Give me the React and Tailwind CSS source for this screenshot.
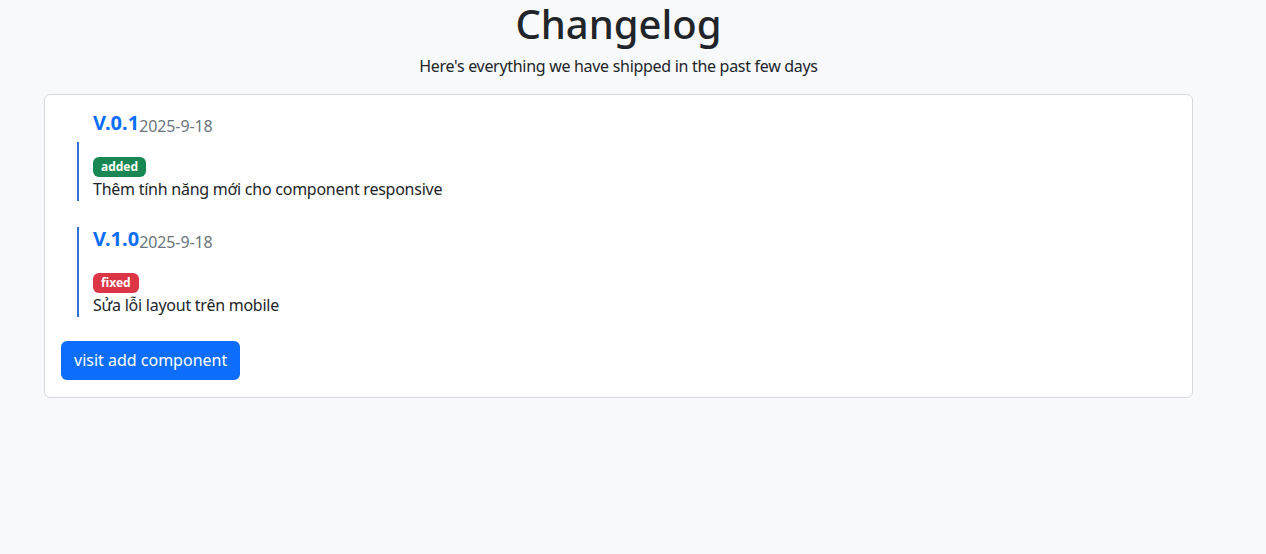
export default function App() {
  const entries = [
    { version: "V.0.1", date: "2025-9-18", tag: "added", tagColor: "bg-[#198754]", text: "Thêm tính năng mới cho component responsive", titleInside: false },
    { version: "V.1.0", date: "2025-9-18", tag: "fixed", tagColor: "bg-[#dc3545]", text: "Sửa lỗi layout trên mobile", titleInside: true },
  ];

  const Title = ({ e }) => (
    <div className="flex items-baseline">
      <span className="text-[20px] leading-[24px] font-bold text-[#0d6efd]">{e.version}</span>
      <span className="text-[16px] leading-[24px] text-[#6c757d] tracking-[-0.1px] translate-y-[2px]">{e.date}</span>
    </div>
  );

  const Body = ({ e }) => (
    <div className="pt-[15px]">
      <div className={`w-fit ${e.tagColor} text-white text-[12px] leading-[12px] font-bold px-[8px] py-[4px] rounded-[6px]`}>{e.tag}</div>
      <p className="text-[16px] leading-[24px] text-[#212529] tracking-[-0.25px]">{e.text}</p>
    </div>
  );

  return (
    <div className="min-h-screen bg-[#f8f9fb] font-['Noto_Sans',sans-serif] text-[#212529]">
      <div className="ml-[44px] w-[1149px]">
        <h1 className="text-center text-[40px] leading-[48px] font-medium">Changelog</h1>
        <p className="text-center text-[16px] leading-[24px] mt-[6px] mb-[16px] tracking-[-0.3px]">Here's everything we have shipped in the past few days</p>
        <div className="bg-white border border-[#d6d8db] rounded-[6px] px-[16px] pt-[16px] pb-[17px]">
          <div className="pl-[16px] flex flex-col gap-[26px]">
            {entries.map((e) =>
              e.titleInside ? (
                <div key={e.version} className="border-l-2 border-[#2f6fd6] pl-[14px]">
                  <Title e={e} />
                  <div className="mt-[6px]"><Body e={e} /></div>
                </div>
              ) : (
                <div key={e.version}>
                  <div className="pl-[16px]"><Title e={e} /></div>
                  <div className="mt-[6px] border-l-2 border-[#2f6fd6] pl-[14px]"><Body e={e} /></div>
                </div>
              )
            )}
          </div>
          <button className="mt-[24px] bg-[#0d6efd] text-white text-[16px] leading-[25px] px-[13px] py-[7px] rounded-[6px] h-[39px]">visit add component</button>
        </div>
      </div>
    </div>
  );
}
